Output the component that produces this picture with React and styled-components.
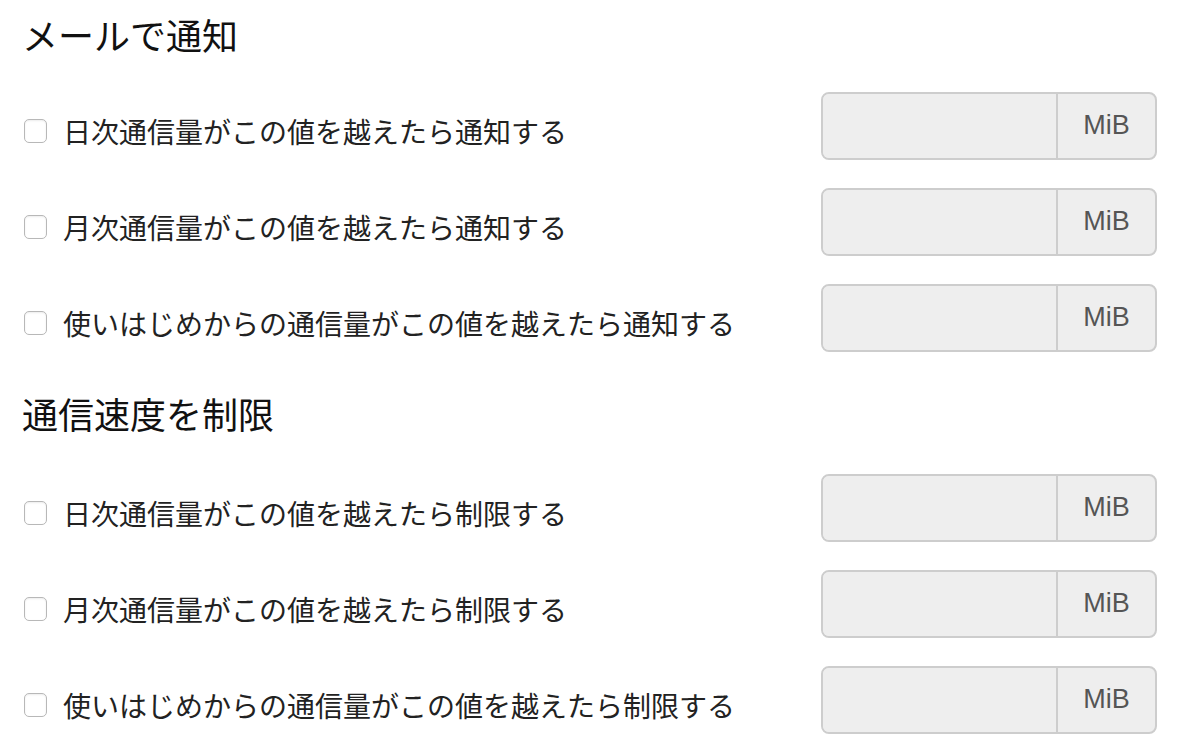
import React from 'react'
import styled, { createGlobalStyle } from 'styled-components'

const GlobalStyle = createGlobalStyle`
  body {
    margin: 0;
    background: #fff;
    font-family: "Noto Sans CJK JP", "Liberation Sans", sans-serif;
    color: #222;
  }
`

const sections = [
  {
    title: 'メールで通知',
    items: [
      '日次通信量がこの値を越えたら通知する',
      '月次通信量がこの値を越えたら通知する',
      '使いはじめからの通信量がこの値を越えたら通知する',
    ],
  },
  {
    title: '通信速度を制限',
    items: [
      '日次通信量がこの値を越えたら制限する',
      '月次通信量がこの値を越えたら制限する',
      '使いはじめからの通信量がこの値を越えたら制限する',
    ],
  },
]

const SettingRow = ({ label }) => (
  <Row>
    <CheckLabel>
      <Check type='checkbox' />
      <span>{label}</span>
    </CheckLabel>
    <InputGroup>
      <Field disabled />
      <Addon>MiB</Addon>
    </InputGroup>
  </Row>
)

const App = () => {
  return (
    <Page>
      <GlobalStyle />
      {sections.map((s, i) => (
        <Section key={s.title} $first={i === 0}>
          <Heading $first={i === 0}>{s.title}</Heading>
          <Rows>
            {s.items.map((item) => (
              <SettingRow key={item} label={item} />
            ))}
          </Rows>
        </Section>
      ))}
    </Page>
  )
}

export default App

const Page = styled.div`
  width: 1182px;
  height: 742px;
  box-sizing: border-box;
  padding: 14px 25px 0 22px;
  overflow: hidden;
`

const Section = styled.section`
  display: flex;
  flex-direction: column;
  margin-top: ${(p) => (p.$first ? '0' : '41px')};
`

const Heading = styled.h2`
  margin: 0 0 ${(p) => (p.$first ? '38px' : '41px')};
  font-size: 36px;
  line-height: 40px;
  font-weight: 400;
  color: #111;
`

const Rows = styled.div`
  display: flex;
  flex-direction: column;
  gap: 28px;
`

const Row = styled.div`
  display: flex;
  align-items: center;
  justify-content: space-between;
  height: 68px;
`

const CheckLabel = styled.label`
  display: flex;
  align-items: center;
  gap: 16px;
  padding-top: 10px;
  padding-left: 2px;
  font-size: 28px;
  line-height: 40px;
  color: #222;
`

const Check = styled.input`
  appearance: none;
  -webkit-appearance: none;
  margin: 0;
  width: 23px;
  height: 24px;
  border: 1px solid #b8b8b8;
  border-radius: 5px;
  background: #fff;
  box-shadow: inset 0 1px 2px rgba(0, 0, 0, 0.08);
  box-sizing: border-box;
`

const InputGroup = styled.div`
  display: flex;
  width: 336px;
  height: 68px;
  border: 2px solid #cdcdcd;
  border-radius: 8px;
  box-sizing: border-box;
  overflow: hidden;
  background: #eee;
`

const Field = styled.input`
  flex: 1;
  min-width: 0;
  border: 0;
  margin: 0;
  background: #eee;
  outline: none;
`

const Addon = styled.div`
  width: 99px;
  display: flex;
  align-items: center;
  justify-content: center;
  border-left: 2px solid #cdcdcd;
  font-family: "Liberation Sans", Arial, sans-serif;
  font-size: 27px;
  color: #555;
  padding-bottom: 1px;
  box-sizing: border-box;
`
